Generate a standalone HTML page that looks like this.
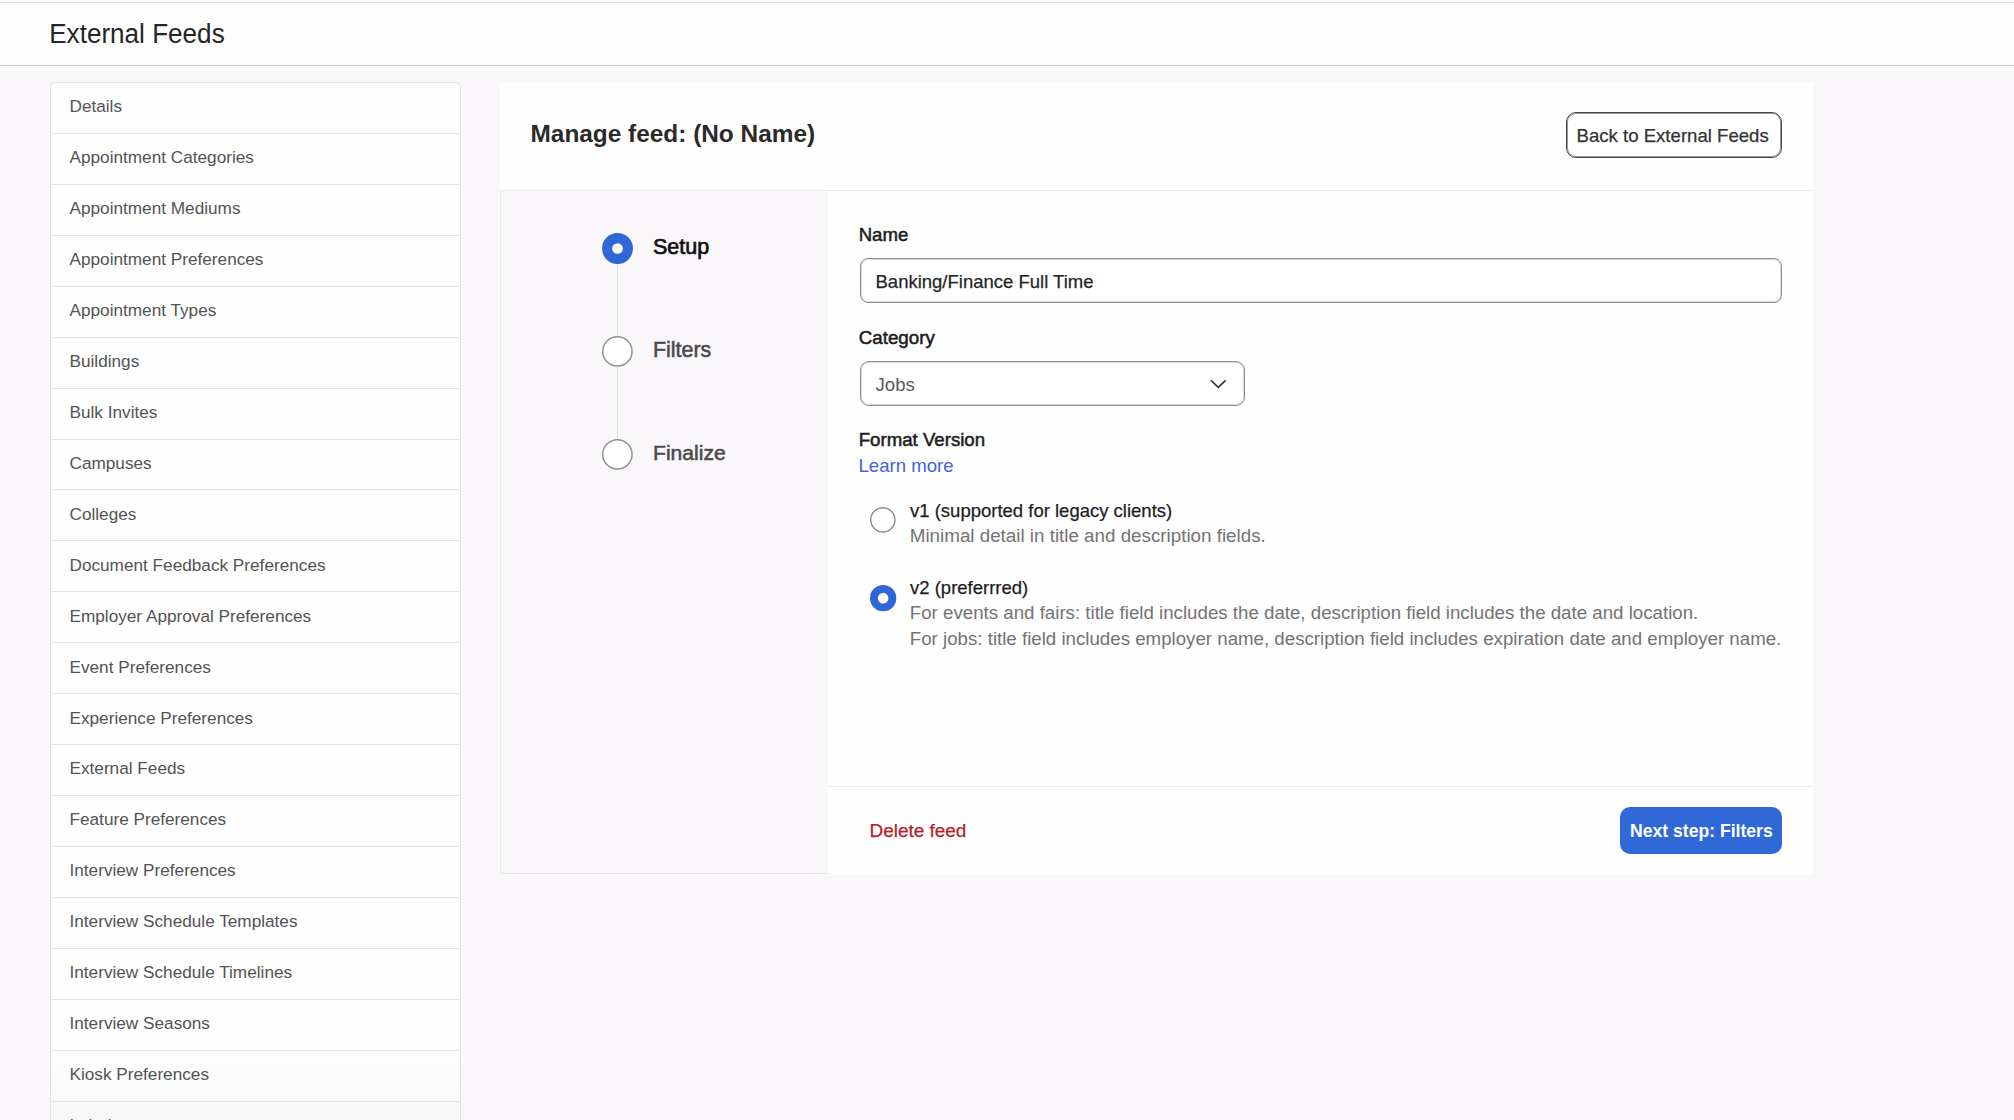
<!DOCTYPE html>
<html><head><meta charset="utf-8"><title>External Feeds</title>
<style>
html,body{margin:0;padding:0;}
body{width:2014px;height:1120px;overflow:hidden;position:relative;background:#f9f7fa;font-family:"Liberation Sans",sans-serif;}
.t{position:absolute;white-space:nowrap;line-height:1;}
.b{position:absolute;box-sizing:border-box;}
</style></head><body>
<div class="b" style="left:0px;top:0px;width:2014px;height:65px;background:#fdfdfd;border-bottom:1px solid #c8c8c8;box-sizing:content-box"></div>
<div class="b" style="left:0px;top:2px;width:2014px;height:1px;background:#e2e2e2"></div>
<div class="t" style="left:49.20px;top:20.60px;font-size:26.1px;color:#262626;font-weight:400;transform:scaleY(1.07);transform-origin:0 22px;">External Feeds</div>
<div class="b" style="left:50px;top:82px;width:411px;height:1100px;background:#fefefe;border:1px solid #e2e2e2;border-radius:5px"></div>
<div class="b" style="left:51px;top:1050.67px;width:409px;height:50px;background:linear-gradient(#fefefe,#f9f9f9)"></div>
<div class="b" style="left:51px;top:1101.60px;width:409px;height:40px;background:#f8f8f8"></div>
<div class="t" style="left:69.50px;top:98.40px;font-size:17.2px;color:#535353;font-weight:400;">Details</div>
<div class="b" style="left:51px;top:132.93px;width:409px;height:1px;background:#e4e4e4"></div>
<div class="t" style="left:69.50px;top:149.33px;font-size:17.2px;color:#535353;font-weight:400;">Appointment Categories</div>
<div class="b" style="left:51px;top:183.86px;width:409px;height:1px;background:#e4e4e4"></div>
<div class="t" style="left:69.50px;top:200.26px;font-size:17.2px;color:#535353;font-weight:400;">Appointment Mediums</div>
<div class="b" style="left:51px;top:234.79px;width:409px;height:1px;background:#e4e4e4"></div>
<div class="t" style="left:69.50px;top:251.19px;font-size:17.2px;color:#535353;font-weight:400;">Appointment Preferences</div>
<div class="b" style="left:51px;top:285.72px;width:409px;height:1px;background:#e4e4e4"></div>
<div class="t" style="left:69.50px;top:302.12px;font-size:17.2px;color:#535353;font-weight:400;">Appointment Types</div>
<div class="b" style="left:51px;top:336.65px;width:409px;height:1px;background:#e4e4e4"></div>
<div class="t" style="left:69.50px;top:353.05px;font-size:17.2px;color:#535353;font-weight:400;">Buildings</div>
<div class="b" style="left:51px;top:387.58px;width:409px;height:1px;background:#e4e4e4"></div>
<div class="t" style="left:69.50px;top:403.98px;font-size:17.2px;color:#535353;font-weight:400;">Bulk Invites</div>
<div class="b" style="left:51px;top:438.51px;width:409px;height:1px;background:#e4e4e4"></div>
<div class="t" style="left:69.50px;top:454.91px;font-size:17.2px;color:#535353;font-weight:400;">Campuses</div>
<div class="b" style="left:51px;top:489.44px;width:409px;height:1px;background:#e4e4e4"></div>
<div class="t" style="left:69.50px;top:505.84px;font-size:17.2px;color:#535353;font-weight:400;">Colleges</div>
<div class="b" style="left:51px;top:540.37px;width:409px;height:1px;background:#e4e4e4"></div>
<div class="t" style="left:69.50px;top:556.77px;font-size:17.2px;color:#535353;font-weight:400;">Document Feedback Preferences</div>
<div class="b" style="left:51px;top:591.30px;width:409px;height:1px;background:#e4e4e4"></div>
<div class="t" style="left:69.50px;top:607.70px;font-size:17.2px;color:#535353;font-weight:400;">Employer Approval Preferences</div>
<div class="b" style="left:51px;top:642.23px;width:409px;height:1px;background:#e4e4e4"></div>
<div class="t" style="left:69.50px;top:658.63px;font-size:17.2px;color:#535353;font-weight:400;">Event Preferences</div>
<div class="b" style="left:51px;top:693.16px;width:409px;height:1px;background:#e4e4e4"></div>
<div class="t" style="left:69.50px;top:709.56px;font-size:17.2px;color:#535353;font-weight:400;">Experience Preferences</div>
<div class="b" style="left:51px;top:744.09px;width:409px;height:1px;background:#e4e4e4"></div>
<div class="t" style="left:69.50px;top:760.49px;font-size:17.2px;color:#535353;font-weight:400;">External Feeds</div>
<div class="b" style="left:51px;top:795.02px;width:409px;height:1px;background:#e4e4e4"></div>
<div class="t" style="left:69.50px;top:811.42px;font-size:17.2px;color:#535353;font-weight:400;">Feature Preferences</div>
<div class="b" style="left:51px;top:845.95px;width:409px;height:1px;background:#e4e4e4"></div>
<div class="t" style="left:69.50px;top:862.35px;font-size:17.2px;color:#535353;font-weight:400;">Interview Preferences</div>
<div class="b" style="left:51px;top:896.88px;width:409px;height:1px;background:#e4e4e4"></div>
<div class="t" style="left:69.50px;top:913.28px;font-size:17.2px;color:#535353;font-weight:400;">Interview Schedule Templates</div>
<div class="b" style="left:51px;top:947.81px;width:409px;height:1px;background:#e4e4e4"></div>
<div class="t" style="left:69.50px;top:964.21px;font-size:17.2px;color:#535353;font-weight:400;">Interview Schedule Timelines</div>
<div class="b" style="left:51px;top:998.74px;width:409px;height:1px;background:#e4e4e4"></div>
<div class="t" style="left:69.50px;top:1015.14px;font-size:17.2px;color:#535353;font-weight:400;">Interview Seasons</div>
<div class="b" style="left:51px;top:1049.67px;width:409px;height:1px;background:#e4e4e4"></div>
<div class="t" style="left:69.50px;top:1066.07px;font-size:17.2px;color:#535353;font-weight:400;">Kiosk Preferences</div>
<div class="b" style="left:51px;top:1100.60px;width:409px;height:1px;background:#e4e4e4"></div>
<div class="t" style="left:69.50px;top:1117.00px;font-size:17.2px;color:#535353;font-weight:400;">Labels</div>
<div class="b" style="left:500px;top:82px;width:1313px;height:792px;background:#fefefe"></div>
<div class="b" style="left:500px;top:190px;width:1313px;height:1px;background:#ececec"></div>
<div class="t" style="left:530.50px;top:121.80px;font-size:24.4px;color:#2a2a2a;font-weight:700;">Manage feed: (No Name)</div>
<div class="b" style="left:1566px;top:112.2px;width:216px;height:46.1px;border:1px solid #444;box-shadow:inset 0 0 0 1px rgba(70,70,70,0.55);border-radius:10px;background:#fff"></div>
<div class="t" style="left:1576.50px;top:127.00px;font-size:18.6px;color:#333;font-weight:400;-webkit-text-stroke:0.25px currentColor;">Back to External Feeds</div>
<div class="b" style="left:500px;top:191px;width:328px;height:683px;background:#f9f7fa;border-left:1px solid #e8e8e8;border-bottom:1px solid #e6e6e6;border-radius:0 0 0 3px"></div>
<div class="b" style="left:617px;top:264px;width:1.4px;height:175px;background:#e4e4e4"></div>
<svg class="b" style="left:599.90px;top:231.20px" width="35.00" height="35.00" viewBox="0 0 35.00 35.00"><circle cx="17.50" cy="17.50" r="15.5" fill="#3067d6"/><circle cx="17.50" cy="17.50" r="5.35" fill="#fff"/></svg>
<svg class="b" style="left:600.00px;top:334.10px" width="34.80" height="34.80" viewBox="0 0 34.80 34.80"><circle cx="17.40" cy="17.40" r="14.65" fill="#fff" stroke="#909090" stroke-width="1.5"/></svg>
<svg class="b" style="left:600.00px;top:437.10px" width="34.80" height="34.80" viewBox="0 0 34.80 34.80"><circle cx="17.40" cy="17.40" r="14.65" fill="#fff" stroke="#909090" stroke-width="1.5"/></svg>
<div class="t" style="left:653.00px;top:236.50px;font-size:21.5px;color:#111;font-weight:400;-webkit-text-stroke:0.7px currentColor;">Setup</div>
<div class="t" style="left:653.00px;top:339.70px;font-size:21.4px;color:#4a4a4a;font-weight:400;-webkit-text-stroke:0.55px currentColor;">Filters</div>
<div class="t" style="left:653.00px;top:441.80px;font-size:21.1px;color:#4a4a4a;font-weight:400;-webkit-text-stroke:0.55px currentColor;">Finalize</div>
<div class="t" style="left:858.70px;top:226.30px;font-size:18.6px;color:#1e1e1e;font-weight:400;-webkit-text-stroke:0.55px currentColor;">Name</div>
<div class="b" style="left:859.5px;top:258.3px;width:922.3px;height:45.1px;border:1px solid #8e8e8e;box-shadow:inset 0 0 0 1px rgba(150,150,150,0.35);border-radius:8px;background:#fff"></div>
<div class="t" style="left:875.50px;top:272.60px;font-size:18.5px;color:#262626;font-weight:400;-webkit-text-stroke:0.25px currentColor;">Banking/Finance Full Time</div>
<div class="t" style="left:858.70px;top:328.50px;font-size:18.8px;color:#1e1e1e;font-weight:400;-webkit-text-stroke:0.55px currentColor;">Category</div>
<div class="b" style="left:859.5px;top:361.2px;width:385.5px;height:45.2px;border:1px solid #8e8e8e;box-shadow:inset 0 0 0 1px rgba(150,150,150,0.35);border-radius:9px;background:#fff"></div>
<div class="t" style="left:875.50px;top:375.50px;font-size:18.6px;color:#5a5a5a;font-weight:400;">Jobs</div>
<svg class="b" style="left:1208px;top:374px" width="20" height="20" viewBox="0 0 20 20"><path d="M3 6.4 L10.3 13.4 L17.6 6.4" fill="none" stroke="#333" stroke-width="1.6"/></svg>
<div class="t" style="left:858.70px;top:431.30px;font-size:18.65px;color:#1e1e1e;font-weight:400;-webkit-text-stroke:0.55px currentColor;">Format Version</div>
<div class="t" style="left:858.50px;top:456.60px;font-size:18.6px;color:#4262e0;font-weight:400;">Learn more</div>
<svg class="b" style="left:867.65px;top:505.25px" width="29.70" height="29.70" viewBox="0 0 29.70 29.70"><circle cx="14.85" cy="14.85" r="12.15" fill="#fff" stroke="#8c8c8c" stroke-width="1.4"/></svg>
<svg class="b" style="left:867.55px;top:582.55px" width="30.30" height="30.30" viewBox="0 0 30.30 30.30"><circle cx="15.15" cy="15.15" r="13.15" fill="#3067d6"/><circle cx="15.15" cy="15.15" r="5.3" fill="#fff"/></svg>
<div class="t" style="left:910.00px;top:502.00px;font-size:18.5px;color:#1e1e1e;font-weight:400;-webkit-text-stroke:0.25px currentColor;">v1 (supported for legacy clients)</div>
<div class="t" style="left:909.80px;top:527.20px;font-size:18.8px;color:#737373;font-weight:400;">Minimal detail in title and description fields.</div>
<div class="t" style="left:910.00px;top:579.00px;font-size:18.5px;color:#1e1e1e;font-weight:400;-webkit-text-stroke:0.25px currentColor;">v2 (preferrred)</div>
<div class="t" style="left:909.80px;top:604.20px;font-size:18.69px;color:#737373;font-weight:400;">For events and fairs: title field includes the date, description field includes the date and location.</div>
<div class="t" style="left:909.80px;top:630.00px;font-size:18.69px;color:#737373;font-weight:400;">For jobs: title field includes employer name, description field includes expiration date and employer name.</div>
<div class="b" style="left:828px;top:786px;width:985px;height:1px;background:#ececec"></div>
<div class="t" style="left:869.50px;top:821.70px;font-size:18.95px;color:#b2222b;font-weight:400;-webkit-text-stroke:0.25px currentColor;">Delete feed</div>
<div class="b" style="left:1620px;top:807.2px;width:162.1px;height:46.5px;border-radius:10px;background:#3168d8"></div>
<div class="t" style="left:1630.00px;top:822.80px;font-size:17.6px;color:#fff;font-weight:700;">Next step: Filters</div>
</body></html>
